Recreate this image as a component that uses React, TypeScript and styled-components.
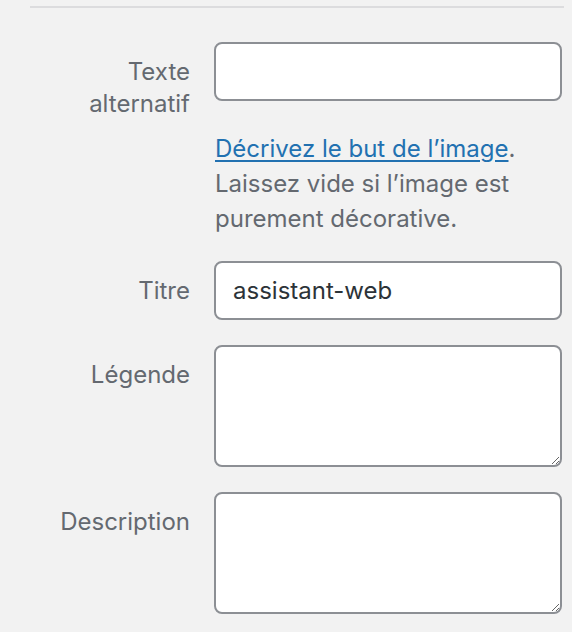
import React from 'react';
import styled, { createGlobalStyle } from 'styled-components';

const GlobalStyle = createGlobalStyle`
  html, body {
    margin: 0;
    padding: 0;
    background: #f2f2f2;
  }
  body {
    font-family: Inter, "Liberation Sans", sans-serif;
  }
`;

function AttachmentSettings() {
  return (
    <Panel>
      <Divider />
      <Settings>
        <Setting>
          <Name htmlFor="alt">Texte alternatif</Name>
          <Field>
            <TextInput id="alt" type="text" defaultValue="" />
            <Help>
              <HelpLine>
                <a href="#">Décrivez le but de l’image</a>.
              </HelpLine>
              <HelpLine>Laissez vide si l’image est purement décorative.</HelpLine>
            </Help>
          </Field>
        </Setting>
        <Setting>
          <Name htmlFor="title">Titre</Name>
          <Field>
            <TextInput id="title" type="text" defaultValue="assistant-web" />
          </Field>
        </Setting>
        <Setting>
          <Name htmlFor="caption">Légende</Name>
          <Field>
            <TextArea id="caption" />
          </Field>
        </Setting>
        <Setting>
          <Name htmlFor="description">Description</Name>
          <Field>
            <TextArea id="description" />
          </Field>
        </Setting>
      </Settings>
    </Panel>
  );
}

const Panel = styled.div`
  padding: 6px 8px 0 30px;
  width: 534px;
`;

const Divider = styled.hr`
  margin: 0;
  border: 0;
  height: 2px;
  background: #dcdcde;
`;

const Settings = styled.div`
  display: flex;
  flex-direction: column;
  gap: 25px;
  padding-top: 34px;
`;

const Setting = styled.div`
  display: grid;
  grid-template-columns: 160px 348px;
  column-gap: 24px;
  align-items: start;
`;

const Name = styled.label`
  padding-top: 14px;
  text-align: right;
  font-size: 24px;
  line-height: 32px;
  color: #646970;
`;

const Field = styled.div`
  display: flex;
  flex-direction: column;
`;

const control = `
  box-sizing: border-box;
  width: 100%;
  margin: 0;
  border: 2px solid #8c8f94;
  border-radius: 8px;
  background: #fff;
  color: #2c3338;
  font-family: Inter, "Liberation Sans", sans-serif;
  font-size: 24px;
  outline: none;
`;

const TextInput = styled.input`
  ${control}
  height: 59px;
  padding: 0 17px;
`;

const TextArea = styled.textarea`
  ${control}
  display: block;
  height: 122px;
  padding: 8px 17px;
  resize: vertical;
`;

const Help = styled.p`
  margin: 30px 0 0;
  padding-left: 1px;
  font-size: 24px;
  line-height: 35px;
  color: #646970;

  a {
    color: #2271b1;
    text-decoration: underline;
    text-underline-offset: 3px;
  }
`;

const HelpLine = styled.span`
  display: block;
`;

export default function App() {
  return (
    <>
      <GlobalStyle />
      <AttachmentSettings />
    </>
  );
}
